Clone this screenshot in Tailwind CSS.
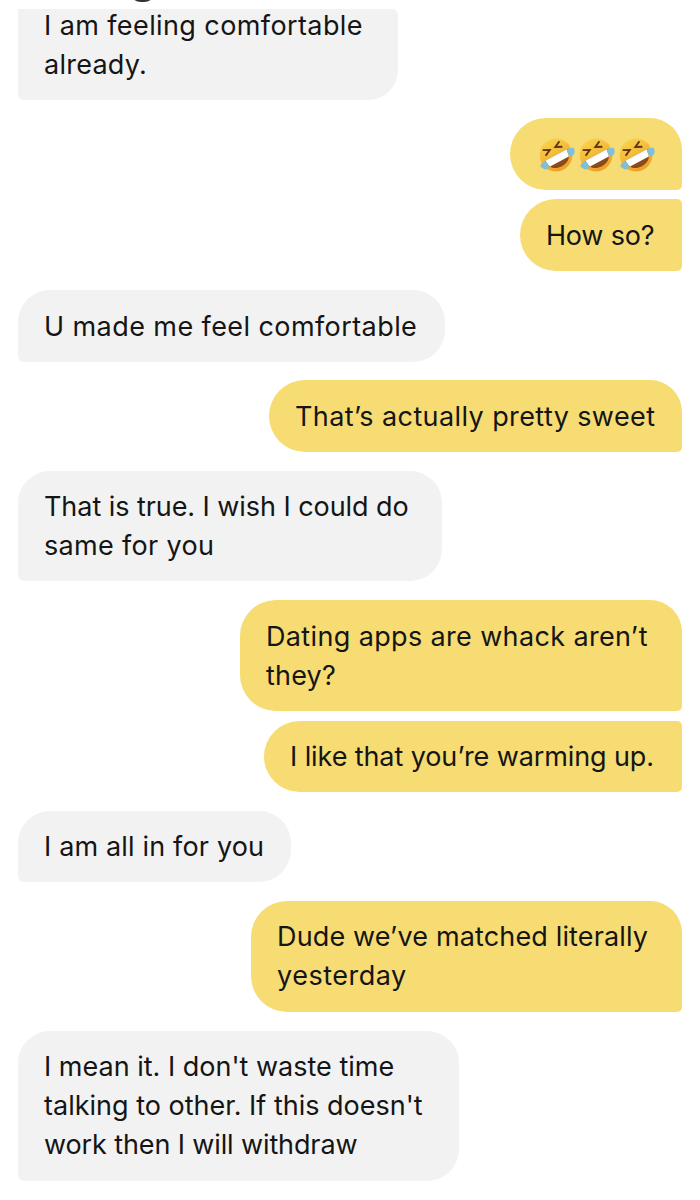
<!DOCTYPE html>
<html lang="en">
<head>
  <meta charset="UTF-8">
  <title>Chat</title>
  <script src="https://cdn.jsdelivr.net/npm/@tailwindcss/browser@4"></script>
</head>
<body class="bg-white">
  <div class="relative w-[700px] h-[1200px] overflow-hidden px-[18px] pt-[9px] font-['Inter',sans-serif] text-[27px] leading-[39.3px] text-[#151515]">
    <div class="absolute left-[129px] top-[-10px] w-[27px] h-[12px] rounded-b-full bg-[#333]"></div>

    <div class="flow-root w-[380px] h-[91px] bg-[#f2f2f2] rounded-tr-[6px] rounded-br-[30px] rounded-bl-[6px] pl-[26px]"><p class="-mt-[3px]"><span class="tracking-[0.4px]">I am feeling comfortable</span><br><span class="tracking-[0.25px]">already.</span></p></div>

    <div class="ml-[492px] mt-[18px] w-[172px] h-[72px] bg-[#f6dc72] rounded-l-[36px] rounded-tr-[32px] rounded-br-[5px] flex items-center justify-center gap-[2px] pt-[1px]">
      <svg width="38" height="38" viewBox="0 0 36 36"><defs><linearGradient id="face" x1="0" y1="0" x2="0" y2="1"><stop offset="0" stop-color="#f9d04a"/><stop offset="1" stop-color="#ee9f24"/></linearGradient></defs><g transform="rotate(-28 18 18)"><circle cx="18" cy="18" r="15.5" fill="url(#face)"/><path d="M9 8l6 3-6 3M27 8l-6 3 6 3" fill="none" stroke="#5c3514" stroke-width="1.8"/><path d="M6 18H30c0 8-5 12-12 12S6 26 6 18z" fill="#8a4a1c"/><path d="M6.500 18H29.500c0 3-.5 5-1.500 7H8c-1-2-1.500-4-1.500-7z" fill="#fff"/><path d="M0 20c2-2 5-2 7-1 1 3 0 6-2 7-3 0-5-3-5-6zM36 20c-2-2-5-2-7-1-1 3 0 6 2 7 3 0 5-3 5-6z" fill="#7cc0dc"/></g></svg>
      <svg width="38" height="38" viewBox="0 0 36 36"><g transform="rotate(-28 18 18)"><circle cx="18" cy="18" r="15.5" fill="url(#face)"/><path d="M9 8l6 3-6 3M27 8l-6 3 6 3" fill="none" stroke="#5c3514" stroke-width="1.8"/><path d="M6 18H30c0 8-5 12-12 12S6 26 6 18z" fill="#8a4a1c"/><path d="M6.500 18H29.500c0 3-.5 5-1.500 7H8c-1-2-1.500-4-1.500-7z" fill="#fff"/><path d="M0 20c2-2 5-2 7-1 1 3 0 6-2 7-3 0-5-3-5-6zM36 20c-2-2-5-2-7-1-1 3 0 6 2 7 3 0 5-3 5-6z" fill="#7cc0dc"/></g></svg>
      <svg width="38" height="38" viewBox="0 0 36 36"><g transform="rotate(-28 18 18)"><circle cx="18" cy="18" r="15.5" fill="url(#face)"/><path d="M9 8l6 3-6 3M27 8l-6 3 6 3" fill="none" stroke="#5c3514" stroke-width="1.8"/><path d="M6 18H30c0 8-5 12-12 12S6 26 6 18z" fill="#8a4a1c"/><path d="M6.500 18H29.500c0 3-.5 5-1.500 7H8c-1-2-1.500-4-1.500-7z" fill="#fff"/><path d="M0 20c2-2 5-2 7-1 1 3 0 6-2 7-3 0-5-3-5-6zM36 20c-2-2-5-2-7-1-1 3 0 6 2 7 3 0 5-3 5-6z" fill="#7cc0dc"/></g></svg>
    </div>

    <div class="ml-[502px] mt-[9px] w-[162px] h-[72px] bg-[#f6dc72] rounded-l-[36px] rounded-tr-[5px] rounded-br-[5px] pl-[26px] pt-[17px] tracking-[-0.2px]">How so?</div>

    <div class="mt-[19px] w-[427px] h-[72px] bg-[#f2f2f2] rounded-t-[32px] rounded-br-[32px] rounded-bl-[6px] pl-[26px] pt-[17px] tracking-[0.42px]">U made me feel comfortable</div>

    <div class="ml-[251px] mt-[18px] w-[413px] h-[72px] bg-[#f6dc72] rounded-l-[36px] rounded-tr-[32px] rounded-br-[5px] pl-[26px] pt-[17px] tracking-[0.4px]">That’s actually pretty sweet</div>

    <div class="mt-[19px] w-[424px] h-[110px] bg-[#f2f2f2] rounded-t-[32px] rounded-br-[32px] rounded-bl-[6px] pl-[26px] pt-[16px]"><span class="tracking-[-0.06px]">That is true. I wish I could do</span><br><span class="tracking-[0.33px]">same for you</span></div>

    <div class="ml-[222px] mt-[19px] w-[442px] h-[111px] bg-[#f6dc72] rounded-l-[36px] rounded-tr-[32px] rounded-br-[5px] pl-[26px] pt-[17px]"><span class="tracking-[0.36px]">Dating apps are whack aren’t</span><br><span class="tracking-[0.2px]">they?</span></div>

    <div class="ml-[246px] mt-[10px] w-[418px] h-[71px] bg-[#f6dc72] rounded-l-[36px] rounded-tr-[5px] rounded-br-[5px] pl-[26px] pt-[16px] tracking-[-0.1px]">I like that you’re warming up.</div>

    <div class="mt-[19px] w-[273px] h-[71px] bg-[#f2f2f2] rounded-t-[32px] rounded-br-[32px] rounded-bl-[6px] pl-[26px] pt-[16px] tracking-[0.16px]">I am all in for you</div>

    <div class="ml-[233px] mt-[19px] w-[431px] h-[111px] bg-[#f6dc72] rounded-l-[36px] rounded-tr-[32px] rounded-br-[5px] pl-[26px] pt-[16px]"><span class="tracking-[0.14px]">Dude we’ve matched literally</span><br><span class="tracking-[0.5px]">yesterday</span></div>

    <div class="mt-[19px] w-[441px] h-[150px] bg-[#f2f2f2] rounded-t-[32px] rounded-br-[32px] rounded-bl-[6px] pl-[26px] pt-[16px] leading-[39px]">I mean it. I don't waste time<br>talking to other. If this doesn't<br><span class="tracking-[-0.12px]">work then I will withdraw</span></div>
  </div>
</body>
</html>
